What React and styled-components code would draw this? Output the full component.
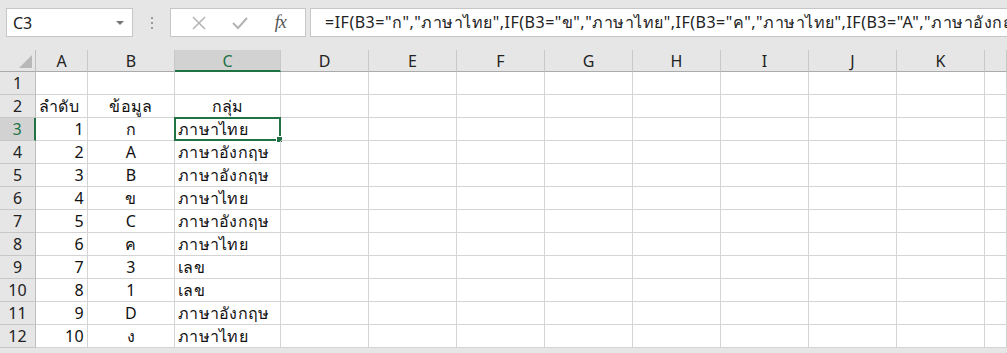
import React from "react";
import styled, { createGlobalStyle } from "styled-components";

const GlobalStyle = createGlobalStyle`
  html, body {
    margin: 0;
    padding: 0;
    background: #ffffff;
  }
  body {
    font-family: "Noto Sans", "Liberation Sans", sans-serif;
    overflow: hidden;
  }
`;

const Page = styled.div`
  width: 1007px;
  height: 353px;
  overflow: hidden;
  background: #e6e6e6;
`;

const FormulaBar = styled.div`
  height: 50px;
  display: flex;
  align-items: flex-start;
  padding: 8px 0 0 6px;
  box-sizing: border-box;
  background: #e6e6e6;
`;

const NameBox = styled.div`
  width: 127px;
  height: 29px;
  box-sizing: border-box;
  border: 1px solid #c6c6c6;
  background: #fff;
  display: flex;
  align-items: center;
  justify-content: space-between;
  padding: 0 8px 0 6px;
  font-size: 16px;
  color: #222;
`;

const Caret = styled.div`
  width: 0;
  height: 0;
  border-left: 4px solid transparent;
  border-right: 4px solid transparent;
  border-top: 4px solid #777;
`;

const Grip = styled.div`
  width: 37px;
  height: 29px;
  display: flex;
  flex-direction: column;
  align-items: center;
  justify-content: center;
  gap: 3px;
  span {
    width: 2px;
    height: 2px;
    background: #9a9a9a;
  }
`;

const ButtonBox = styled.div`
  width: 136px;
  height: 29px;
  box-sizing: border-box;
  border: 1px solid #c6c6c6;
  background: #fff;
  display: flex;
  align-items: center;
  justify-content: space-around;
  padding: 0 6px 0 8px;
  margin-right: 4px;
`;

const Fx = styled.span`
  font-family: "Liberation Serif", serif;
  font-style: italic;
  font-size: 18px;
  color: #555;
  letter-spacing: -1px;
`;

const FormulaInput = styled.div`
  flex: 1;
  height: 29px;
  box-sizing: border-box;
  border: 1px solid #c6c6c6;
  border-right: none;
  background: #fff;
  display: flex;
  align-items: center;
  padding-left: 14px;
  font-size: 16px;
  letter-spacing: 0.5px;
  white-space: nowrap;
  overflow: hidden;
  color: #222;
`;

const Sheet = styled.div`
  display: grid;
  grid-template-columns: 36px 52px 87px 106px repeat(8, 88px) 22px;
  grid-template-rows: 22px repeat(12, 23px);
  background: #fff;
`;

const Corner = styled.div`
  background: #e6e6e6;
  border-right: 1px solid #bdbdbd;
  border-bottom: 1px solid #ababab;
  box-sizing: border-box;
  position: relative;
  &::after {
    content: "";
    position: absolute;
    right: 3px;
    bottom: 3px;
    width: 0;
    height: 0;
    border-left: 13px solid transparent;
    border-bottom: 13px solid #b8b8b8;
  }
`;

const ColHead = styled.div`
  background: ${(p) => (p.$active ? "#d2d2d2" : "#e6e6e6")};
  color: ${(p) => (p.$active ? "#217346" : "#222")};
  border-right: 1px solid #c8c8c8;
  border-bottom: ${(p) => (p.$active ? "2px solid #217346" : "1px solid #ababab")};
  box-sizing: border-box;
  display: flex;
  align-items: center;
  justify-content: center;
  font-size: 16px;
  padding-top: 1px;
`;

const RowHead = styled.div`
  background: ${(p) => (p.$active ? "#d2d2d2" : "#e6e6e6")};
  color: ${(p) => (p.$active ? "#217346" : "#222")};
  border-right: ${(p) => (p.$active ? "2px solid #217346" : "1px solid #bdbdbd")};
  border-bottom: 1px solid #c8c8c8;
  box-sizing: border-box;
  display: flex;
  align-items: center;
  justify-content: center;
  font-size: 16px;
`;

const Cell = styled.div`
  border-right: 1px solid #d4d4d4;
  border-bottom: 1px solid #d4d4d4;
  box-sizing: border-box;
  display: flex;
  align-items: center;
  justify-content: ${(p) => p.$align || "flex-start"};
  padding: 0 3px;
  font-size: 16px;
  letter-spacing: 0.3px;
  color: #111;
  white-space: nowrap;
  position: relative;
`;

const Selection = styled.div`
  position: absolute;
  left: -1px;
  top: -1px;
  right: -1px;
  bottom: -1px;
  border: 2px solid #217346;
  pointer-events: none;
  &::after {
    content: "";
    position: absolute;
    right: -4px;
    bottom: -4px;
    width: 5px;
    height: 5px;
    background: #217346;
    border: 1px solid #fff;
  }
`;

const columns = ["A", "B", "C", "D", "E", "F", "G", "H", "I", "J", "K", ""];

const rows = [
  ["", "", ""],
  ["ลำดับ", "ข้อมูล", "กลุ่ม"],
  ["1", "ก", "ภาษาไทย"],
  ["2", "A", "ภาษาอังกฤษ"],
  ["3", "B", "ภาษาอังกฤษ"],
  ["4", "ข", "ภาษาไทย"],
  ["5", "C", "ภาษาอังกฤษ"],
  ["6", "ค", "ภาษาไทย"],
  ["7", "3", "เลข"],
  ["8", "1", "เลข"],
  ["9", "D", "ภาษาอังกฤษ"],
  ["10", "ง", "ภาษาไทย"],
];

const formula =
  '=IF(B3="ก","ภาษาไทย",IF(B3="ข","ภาษาไทย",IF(B3="ค","ภาษาไทย",IF(B3="A","ภาษาอังกฤษ",IF(B3="B","ภาษาอังกฤษ",IF(B3="C","ภาษาอังกฤษ","เลข"))))))';

const App = () => {
  return (
    <Page>
      <GlobalStyle />
      <FormulaBar>
        <NameBox>
          <span>C3</span>
          <Caret />
        </NameBox>
        <Grip>
          <span />
          <span />
          <span />
        </Grip>
        <ButtonBox>
          <svg width="14" height="14" viewBox="0 0 14 14">
            <path d="M1 1 L13 13 M13 1 L1 13" stroke="#b3b3b3" strokeWidth="1.5" fill="none" />
          </svg>
          <svg width="16" height="14" viewBox="0 0 16 14">
            <path d="M1 7 L6 12 L15 2" stroke="#b3b3b3" strokeWidth="2" fill="none" />
          </svg>
          <Fx>fx</Fx>
        </ButtonBox>
        <FormulaInput>{formula}</FormulaInput>
      </FormulaBar>
      <Sheet>
        <Corner />
        {columns.map((c, i) => (
          <ColHead key={i} $active={c === "C"}>
            {c}
          </ColHead>
        ))}
        {rows.map((r, ri) => {
          const rowNum = ri + 1;
          const active = rowNum === 3;
          const isHeader = rowNum === 2;
          return (
            <React.Fragment key={ri}>
              <RowHead $active={active}>{rowNum}</RowHead>
              <Cell $align={isHeader ? "flex-start" : "flex-end"}>{r[0]}</Cell>
              <Cell $align="center">{r[1]}</Cell>
              <Cell $align={isHeader ? "center" : "flex-start"}>
                {r[2]}
                {active && <Selection />}
              </Cell>
              {columns.slice(3).map((c, ci) => (
                <Cell key={ci} />
              ))}
            </React.Fragment>
          );
        })}
      </Sheet>
    </Page>
  );
};

export default App;
